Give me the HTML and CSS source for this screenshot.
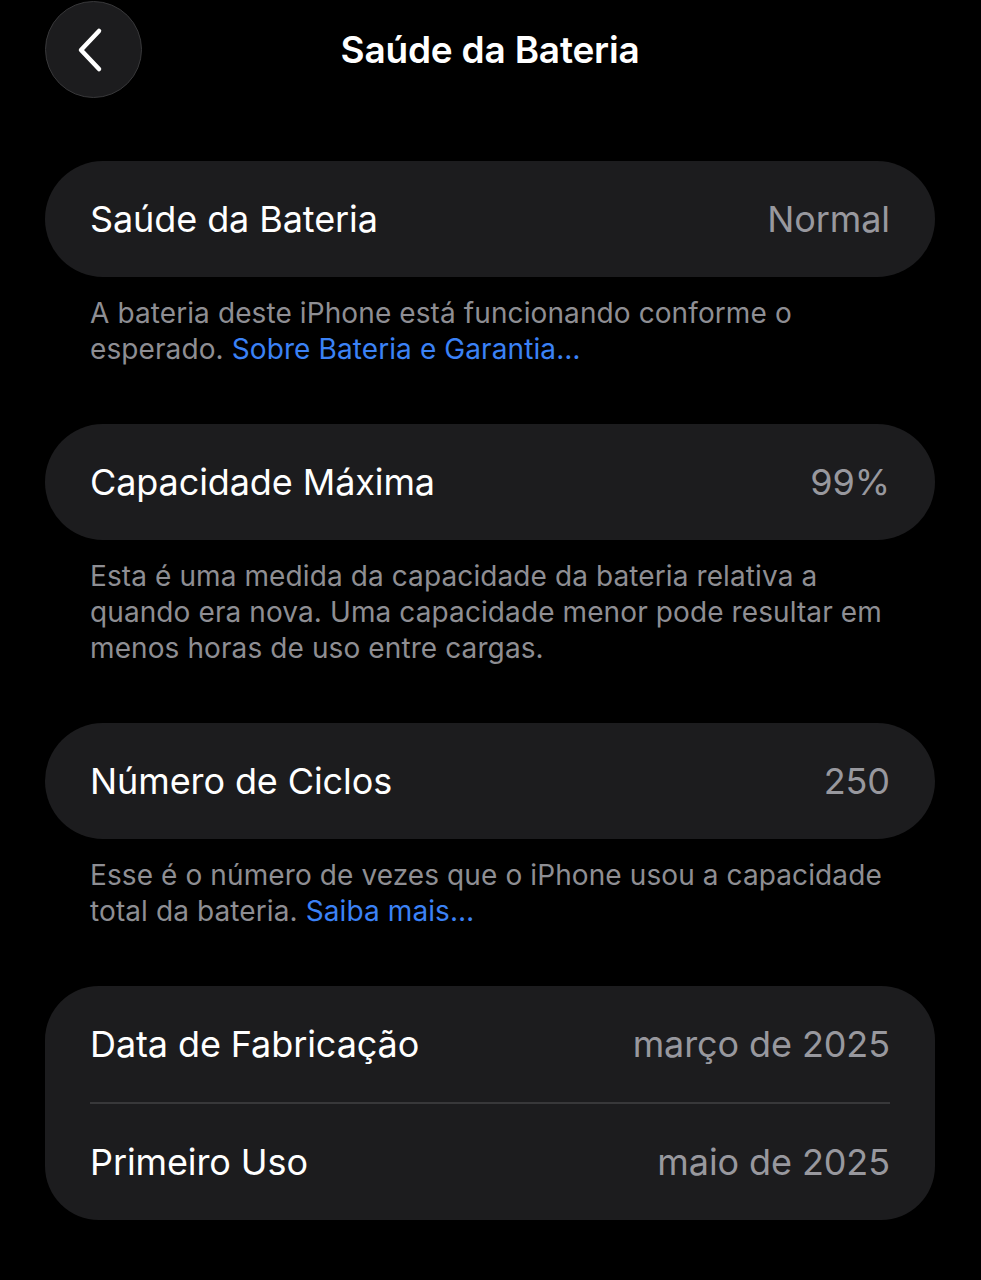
FILE: index.html
```html
<!DOCTYPE html>
<html lang="pt-BR">
<head>
<meta charset="utf-8">
<title>Saúde da Bateria</title>
<link rel="stylesheet" href="styles.css">
</head>
<body>
<div class="screen">
  <header class="nav">
    <button class="back" aria-label="Voltar">
      <svg width="30" height="46" viewBox="0 0 30 46"><path d="M24 4 L6 23 L24 42" fill="none" stroke="#fff" stroke-width="4.5" stroke-linecap="round" stroke-linejoin="round"/></svg>
    </button>
    <h1 class="title">Saúde da Bateria</h1>
  </header>

  <section class="group">
    <div class="card pill">
      <div class="row"><span class="label">Saúde da Bateria</span><span class="value">Normal</span></div>
    </div>
    <p class="note">A bateria deste iPhone está funcionando conforme o esperado. <a class="link">Sobre Bateria e Garantia…</a></p>
  </section>

  <section class="group">
    <div class="card pill">
      <div class="row"><span class="label">Capacidade Máxima</span><span class="value">99%</span></div>
    </div>
    <p class="note">Esta é uma medida da capacidade da bateria relativa a quando era nova. Uma capacidade menor pode resultar em menos horas de uso entre cargas.</p>
  </section>

  <section class="group">
    <div class="card pill">
      <div class="row"><span class="label">Número de Ciclos</span><span class="value">250</span></div>
    </div>
    <p class="note">Esse é o número de vezes que o iPhone usou a capacidade total da bateria. <a class="link">Saiba mais…</a></p>
  </section>

  <section class="group">
    <div class="card list">
      <div class="row"><span class="label">Data de Fabricação</span><span class="value">março de 2025</span></div>
      <div class="divider"></div>
      <div class="row"><span class="label">Primeiro Uso</span><span class="value">maio de 2025</span></div>
    </div>
  </section>
</div>
</body>
</html>
```

FILE: styles.css
```css
* { box-sizing: border-box; }
html, body { margin: 0; padding: 0; background: #000; }
body {
  font-family: Inter, "Noto Sans", "Liberation Sans", sans-serif;
  color: #fff;
  width: 981px;
  min-height: 1280px;
}
.screen {
  padding: 1px 46px 0 45px;
}
.nav {
  display: grid;
  grid-template-columns: 97px 1fr 97px;
  align-items: center;
  height: 97px;
  margin-bottom: 63px;
}
.back {
  width: 97px;
  height: 97px;
  border-radius: 50%;
  background: #1c1c1e;
  border: 1px solid #38383a;
  display: flex;
  align-items: center;
  justify-content: center;
  padding: 0 8px 0 0;
  margin: 0;
}
.title {
  grid-column: 2;
  margin: 0;
  text-align: center;
  font-size: 37px;
  font-weight: 600;
  letter-spacing: -0.2px;
}
.group { margin-bottom: 57px; }
.card {
  background: #1c1c1e;
  padding: 0 45px;
}
.pill { border-radius: 58px; }
.list { border-radius: 54px; }
.row {
  display: flex;
  justify-content: space-between;
  align-items: center;
  height: 116px;
  font-size: 36px;
  letter-spacing: -0.1px;
}
.label { color: #fff; }
.value { color: #98989e; }
.divider {
  height: 2px;
  background: #38383a;
}
.note {
  margin: 18px 0 0;
  padding: 0 25px 0 45px;
  font-size: 28px;
  line-height: 36px;
  color: #8e8e93;
  letter-spacing: 0.1px;
}
.link { color: #3b82f6; text-decoration: none; }
```
